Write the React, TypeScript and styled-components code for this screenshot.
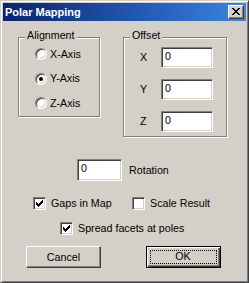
import styled, { createGlobalStyle } from "styled-components";

const FACE = "#d4d0c8";

const GlobalStyle = createGlobalStyle`
  body {
    margin: 0;
    background: ${FACE};
    font-family: "Liberation Sans", Arial, sans-serif;
    font-size: 10.7px;
    color: #000;
  }
`;

const X_ROWS = ["##....##", ".##..##.", "..####..", "...##...", "..####..", ".##..##.", "##....##"];
// classic 7x7 check: column -> first row of a 3px run
const CHECK_COLS = [2, 3, 4, 3, 2, 1, 0];

function CloseGlyph() {
  return (
    <svg width="8" height="7" viewBox="0 0 8 7" shapeRendering="crispEdges">
      {X_ROWS.flatMap((row, y) =>
        row.split("").map((c, x) =>
          c === "#" ? <rect key={`${x}-${y}`} x={x} y={y} width="1" height="1" fill="#000" /> : null
        )
      )}
    </svg>
  );
}

function CheckGlyph() {
  return (
    <svg width="7" height="7" viewBox="0 0 7 7" shapeRendering="crispEdges">
      {CHECK_COLS.map((top, x) => (
        <rect key={x} x={x} y={top} width="1" height="3" fill="#000" />
      ))}
    </svg>
  );
}

function Radio({ label, checked }: { label: string; checked?: boolean }) {
  return (
    <RadioRow>
      <RadioCircle>{checked && <RadioDot />}</RadioCircle>
      <span>{label}</span>
    </RadioRow>
  );
}

function Check({ label, checked, $width }: { label: string; checked?: boolean; $width?: number }) {
  return (
    <CheckItem $width={$width}>
      <CheckBox>{checked && <CheckGlyph />}</CheckBox>
      <span>{label}</span>
    </CheckItem>
  );
}

export default function App() {
  return (
    <>
      <GlobalStyle />
      <Window>
        <TitleBar>
          <Title>Polar Mapping</Title>
          <CloseButton>
            <CloseGlyph />
          </CloseButton>
        </TitleBar>
        <Body>
          <TopRow>
            <GroupBox $width={82} $height={80}>
              <GroupLabel>Alignment</GroupLabel>
              <RadioList>
                <Radio label="X-Axis" />
                <Radio label="Y-Axis" checked />
                <Radio label="Z-Axis" />
              </RadioList>
            </GroupBox>
            <GroupBox $width={104} $height={100}>
              <GroupLabel>Offset</GroupLabel>
              <OffsetList>
                {["X", "Y", "Z"].map((axis) => (
                  <OffsetRow key={axis}>
                    <AxisLabel>{axis}</AxisLabel>
                    <TextBox $width={52} $height={21}>0</TextBox>
                  </OffsetRow>
                ))}
              </OffsetList>
            </GroupBox>
          </TopRow>

          <RotationRow>
            <TextBox $width={45} $height={22}>0</TextBox>
            <span>Rotation</span>
          </RotationRow>

          <CheckRow $top={16} $left={30}>
            <Check label="Gaps in Map" checked $width={99} />
            <Check label="Scale Result" />
          </CheckRow>
          <CheckRow $top={12} $left={57}>
            <Check label="Spread facets at poles" checked />
          </CheckRow>

          <ButtonRow>
            <Button>Cancel</Button>
            <Button $default>
              <FocusRect>OK</FocusRect>
            </Button>
          </ButtonRow>
        </Body>
      </Window>
    </>
  );
}

const Window = styled.div`
  box-sizing: border-box;
  width: 249px;
  height: 283px;
  padding: 2px;
  background: ${FACE};
  border: 1px solid;
  border-color: ${FACE} #404040 #404040 ${FACE};
  box-shadow: inset 1px 1px #fff, inset -1px -1px #808080;
  display: flex;
  flex-direction: column;
`;

const TitleBar = styled.div`
  height: 18px;
  display: flex;
  align-items: center;
  justify-content: space-between;
  padding: 0 2px 0 2px;
  background: linear-gradient(90deg, #0a246a 0%, #2a66c4 70%, #3a86dc 100%);
`;

const Title = styled.span`
  color: #fff;
  font-weight: bold;
  font-size: 11px;
  line-height: 13px;
`;

const CloseButton = styled.div`
  box-sizing: border-box;
  width: 16px;
  height: 14px;
  display: flex;
  align-items: center;
  justify-content: center;
  padding: 0 1px 1px 0;
  background: ${FACE};
  border: 1px solid;
  border-color: #fff #404040 #404040 #fff;
  box-shadow: inset -1px -1px #808080;
`;

const Body = styled.div`
  flex: 1;
  display: flex;
  flex-direction: column;
  line-height: 13px;
`;

const TopRow = styled.div`
  display: flex;
  align-items: flex-start;
  gap: 23px;
  margin-top: 16px;
  padding-left: 15px;
`;

const GroupBox = styled.div<{ $width: number; $height: number }>`
  position: relative;
  box-sizing: border-box;
  width: ${(p) => p.$width}px;
  height: ${(p) => p.$height}px;
  border: 1px solid #808080;
  box-shadow: inset 1px 1px #fff, 1px 1px #fff;
`;

const GroupLabel = styled.span`
  position: absolute;
  top: -9px;
  left: 6px;
  padding: 0 2px;
  background: ${FACE};
`;

const RadioList = styled.div`
  display: flex;
  flex-direction: column;
  gap: 12.5px;
  padding: 10px 0 0 16px;
`;

const RadioRow = styled.div`
  height: 12px;
  display: flex;
  align-items: center;
  gap: 3px;
`;

const RadioCircle = styled.span`
  box-sizing: border-box;
  width: 12px;
  height: 12px;
  flex-shrink: 0;
  border-radius: 50%;
  border: 1px solid;
  border-color: #808080 #fff #fff #808080;
  box-shadow: inset 1px 1px #404040, inset -1px -1px ${FACE};
  background: #fff;
  display: flex;
  align-items: center;
  justify-content: center;
`;

const RadioDot = styled.span`
  width: 4px;
  height: 4px;
  border-radius: 50%;
  background: #000;
`;

const OffsetList = styled.div`
  display: flex;
  flex-direction: column;
  gap: 11px;
  padding: 9px 0 0 16px;
`;

const OffsetRow = styled.div`
  display: flex;
  align-items: center;
`;

const AxisLabel = styled.span`
  width: 21px;
`;

const TextBox = styled.div<{ $width: number; $height: number }>`
  box-sizing: border-box;
  width: ${(p) => p.$width}px;
  height: ${(p) => p.$height}px;
  padding: 2px 3px;
  background: #fff;
  border: 1px solid;
  border-color: #808080 #fff #fff #808080;
  box-shadow: inset 1px 1px #404040, inset -1px -1px ${FACE};
`;

const RotationRow = styled.div`
  display: flex;
  align-items: center;
  gap: 7px;
  margin-top: 22px;
  padding-left: 74px;
`;

const CheckRow = styled.div<{ $top: number; $left: number }>`
  display: flex;
  align-items: center;
  margin-top: ${(p) => p.$top}px;
  padding-left: ${(p) => p.$left}px;
`;

const CheckItem = styled.label<{ $width?: number }>`
  display: flex;
  align-items: center;
  gap: 5px;
  height: 13px;
  ${(p) => (p.$width ? `width: ${p.$width}px;` : "")}
`;

const CheckBox = styled.span`
  box-sizing: border-box;
  width: 13px;
  height: 13px;
  flex-shrink: 0;
  display: flex;
  align-items: center;
  justify-content: center;
  background: #fff;
  border: 1px solid;
  border-color: #808080 #fff #fff #808080;
  box-shadow: inset 1px 1px #404040, inset -1px -1px ${FACE};
`;

const ButtonRow = styled.div`
  display: flex;
  gap: 45px;
  margin-top: 11px;
  padding-left: 23px;
`;

const Button = styled.div<{ $default?: boolean }>`
  box-sizing: border-box;
  width: 75px;
  height: 22px;
  display: flex;
  align-items: center;
  justify-content: center;
  background: ${FACE};
  border: 1px solid;
  ${(p) =>
    p.$default
      ? `border-color: #000;
         box-shadow: inset 1px 1px #fff, inset -1px -1px #404040, inset -2px -2px #808080;`
      : `border-color: #fff #404040 #404040 #fff;
         box-shadow: inset -1px -1px #808080;`}
`;

const FocusRect = styled.span`
  box-sizing: border-box;
  width: 67px;
  height: 14px;
  display: flex;
  align-items: center;
  justify-content: center;
  border: 1px dotted #000;
  margin: 0 1px 1px 0;
`;
